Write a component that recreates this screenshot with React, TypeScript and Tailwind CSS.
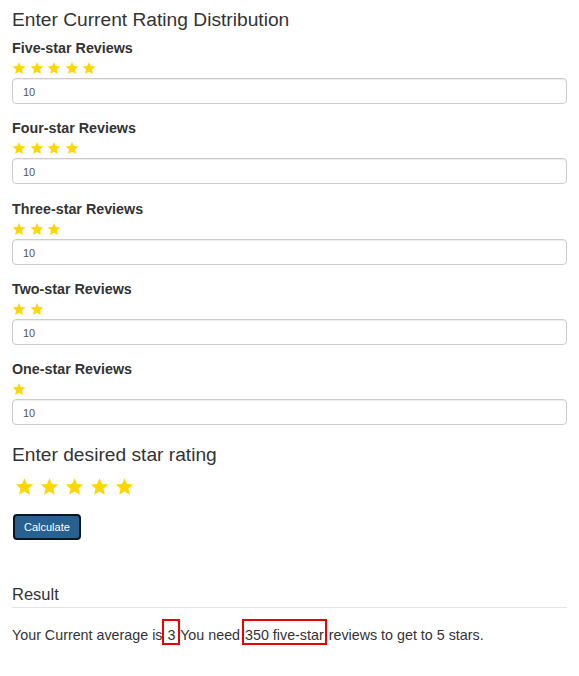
const groups = [
  { label: 'Five-star Reviews', stars: 5 },
  { label: 'Four-star Reviews', stars: 4 },
  { label: 'Three-star Reviews', stars: 3 },
  { label: 'Two-star Reviews', stars: 2 },
  { label: 'One-star Reviews', stars: 1 },
]

function Star({ size }: { size: number }) {
  return (
    <svg width={size} height={size} viewBox="0 0 24 24" className="shrink-0">
      <polygon
        fill="#FFD700"
        points="12,1.5 15.12,8.71 22.94,9.45 17.04,14.64 18.76,22.3 12,18.3 5.24,22.3 6.96,14.64 1.06,9.45 8.88,8.71"
      />
    </svg>
  )
}

export default function App() {
  return (
    <div className="min-h-screen bg-white px-[12px] text-[#333] font-['Liberation_Sans',Arial,sans-serif]">
      <h3 className="pt-[9.5px] text-[19.2px] leading-[20px]">Enter Current Rating Distribution</h3>

      <div className="mt-[8.4px] flex flex-col gap-[14.4px]">
        {groups.map((g) => (
          <div key={g.label}>
            <label className="block text-[14.3px] font-bold leading-[20px]">{g.label}</label>
            <div className="flex h-[20px] items-center gap-[3.6px]">
              {Array.from({ length: g.stars }).map((_, i) => (
                <Star key={i} size={14} />
              ))}
            </div>
            <input
              defaultValue="10"
              className="block h-[26px] w-full rounded-[4px] border border-[#ccc] bg-white px-[10px] pt-[2px] text-[11px] text-[#555] shadow-[inset_0_1px_1px_rgba(0,0,0,0.075)] outline-none"
            />
          </div>
        ))}
      </div>

      <h3 className="mt-[19.5px] text-[19.2px] leading-[20px]">Enter desired star rating</h3>
      <div className="mt-[12.5px] flex h-[18px] items-center gap-[6px] pl-[2.5px]">
        {Array.from({ length: 5 }).map((_, i) => (
          <Star key={i} size={19} />
        ))}
      </div>
      <button className="mt-[19px] ml-[1px] h-[26px] rounded-[4px] border-2 border-[#0b1620] bg-[#286090] px-[9px] text-[11px] leading-none text-white">
        Calculate
      </button>

      <div className="mt-[44px] border-b border-[#e5e5e5] pb-[2.5px] text-[16.5px] leading-[20px]">Result</div>
      <p className="mt-[17px] text-[14.3px] leading-[20px]">
        Your Current average is{' '}
        <span className="-mx-[4px] border-2 border-[#ee0000] px-[3px] pt-[6px]">3</span>
        {' '}You need{' '}
        <span className="-mx-[2px] border-2 border-[#ee0000] px-[1px] pt-[6px]">350 five-star</span>
        {' '}reviews to get to 5 stars.
      </p>
    </div>
  )
}
